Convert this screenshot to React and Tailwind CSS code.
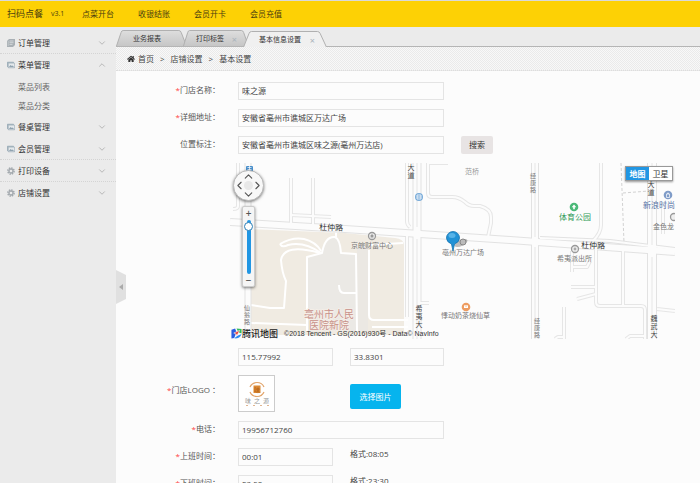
import React from "react";
import { FaHome } from "react-icons/fa";
import { FiChevronDown, FiChevronUp, FiChevronLeft, FiChevronRight } from "react-icons/fi";

const navLinks = ["点菜开台", "收银结账", "会员开卡", "会员充值"];

const menus = [
  { name: "订单管理", icon: "doc" },
  { name: "菜单管理", icon: "card", line: true, open: true, children: ["菜品列表", "菜品分类"] },
  { name: "餐桌管理", icon: "card" },
  { name: "会员管理", icon: "card" },
  { name: "打印设备", icon: "gear", line: true },
  { name: "店铺设置", icon: "gear", line: true },
];

const MenuIcon = ({ type }) => {
  if (type === "doc") {
    return (
      <svg viewBox="0 0 8 8" className="w-[8px] h-[8px] shrink-0">
        <path d="M2 0h6v6l-2 2H0V2z" fill="#a9b0b5" />
        <path d="M2.5 2h4M2.5 3.7h4M2.5 5.4h3" stroke="#e3e6e8" strokeWidth="0.7" />
        <path d="M1.2 2v5" stroke="#d5d9dc" strokeWidth="0.6" />
      </svg>
    );
  }
  if (type === "card") {
    return (
      <svg viewBox="0 0 8 8" className="w-[8px] h-[8px] shrink-0">
        <rect x="0" y="0.8" width="7" height="5.4" rx="0.6" fill="#9fb0bb" />
        <rect x="1" y="1.8" width="7" height="5.4" rx="0.6" fill="#a9b7c0" />
        <rect x="1.7" y="2.5" width="5.6" height="3.8" fill="#e4e9ec" />
        <path d="M1.9 6l1.7-2 1.2 1 .8-.6L7 6z" fill="#90a3b0" />
      </svg>
    );
  }
  return (
    <svg viewBox="0 0 8 8" className="w-[8px] h-[8px] shrink-0">
      <circle cx="4" cy="4" r="3.1" fill="none" stroke="#a3a9ae" strokeWidth="1.5" strokeDasharray="1.5 0.9" />
      <circle cx="4" cy="4" r="2" fill="none" stroke="#a3a9ae" strokeWidth="1.3" />
    </svg>
  );
};

const Sidebar = () => (
  <aside className="w-[116px] shrink-0 bg-[#ebebeb] pt-[4px]">
    {menus.map((menu) => (
      <div key={menu.name}>
        <button
          className={`w-full h-[22px] flex items-center pl-[7px] pr-[9px] border-t border-dotted text-[#333] ${
            menu.line ? "border-[#d4d4d4]" : "border-transparent"
          }`}
        >
          <MenuIcon type={menu.icon} />
          <span className="ml-[3px] flex-1 text-left">{menu.name}</span>
          {menu.open ? (
            <FiChevronUp strokeWidth={1.5} className="text-[10px] text-[#999]" />
          ) : (
            <FiChevronDown strokeWidth={1.5} className="text-[10px] text-[#999]" />
          )}
        </button>
        {menu.children && (
          <ul className="pt-[2px]">
            {menu.children.map((child) => (
              <li key={child} className="h-[19px] leading-[19px] pl-[18px]">
                <a href="#" className="text-[#666]">{child}</a>
              </li>
            ))}
          </ul>
        )}
      </div>
    ))}
  </aside>
);

const Tab = ({ label, active, closable, className }) => (
  <div className={`relative h-[16px] flex items-center pt-[2px] text-[7px] ${active ? "z-10" : ""} ${className}`}>
    <svg viewBox="0 0 70 16" preserveAspectRatio="none" className="absolute inset-0 w-full h-full">
      <defs>
        <linearGradient id="tabFill" x1="0" y1="0" x2="0" y2="1">
          <stop offset="0" stopColor="#dedede" />
          <stop offset="1" stopColor="#c6c6c6" />
        </linearGradient>
      </defs>
      <path
        d="M0.5 16L5 2.5Q5.6 0.5 7 0.5H62Q63.6 0.5 64.3 2.5L69.5 16"
        fill={active ? "#f0f0f0" : "url(#tabFill)"}
        stroke="#b0b0b0"
        vectorEffect="non-scaling-stroke"
      />
    </svg>
    <button className="relative text-[#333]">{label}</button>
    {closable && (
      <button aria-label="关闭" className="relative ml-auto text-[9px] leading-none text-[#a8b2ba]">×</button>
    )}
  </div>
);

const Field = ({ id, label, value, required, className = "w-[206px]", children }) => (
  <div className="flex items-start">
    <label htmlFor={id} className="w-[104px] mr-[18px] text-right leading-[16px] shrink-0 text-[#555]">
      {required && <span className="text-[#f44]">*</span>}
      {label}
    </label>
    <input
      id={id}
      defaultValue={value}
      className={`h-[18px] border border-[#e4e4e4] bg-[#fcfcfc] pl-[3px] pb-[2px] text-[#444] shrink-0 outline-none ${className}`}
    />
    {children}
  </div>
);

const roads = [
  "M8 0V43Q8 46 3 46",
  "M61 15V62",
  "M83 15V62",
  "M61 52L101 54",
  "M177 0V58Q177 62 180 64",
  "M177 72V154",
  "M218 0H198V30Q198 34 202 34H222Q229 34 235 39Q239 43 244 43H250Q261 46 261 54V60L258 74",
  "M371 0V62Q371 70 363 78",
  "M433 38V71",
  "M366 86V139Q366 143 370 143H411Q415 143 415 147V176",
  "M393 86V143",
  "M342 88V109",
  "M342 104H357L360 98",
  "M341 124H366",
  "M347 136L366 131",
  "M427 146L445 148",
  "M334 144V176",
  "M325 176L328 174H334",
  "M396 176L400 173H415",
  "M190 140H199",
];

const campus = [
  "M50 81Q62 74 74 76Q86 79 91 88",
  "M50 81Q52 85 58 82Q74 78 91 90",
  "M77 168V94L92 90Q95 73 105 74Q110 76 111 90L126 91L127 168",
  "M106 74V68",
  "M90 90Q54 80 51 97Q52 110 56 118L54 145H40L21 142",
  "M109 122Q109 130 114 130H126",
  "M21 160L77 162",
  "M139 87V152Q139 157 144 157H178",
  "M142 164H178",
  "M139 82L173 80",
  "M176 80V154",
];

const VText = ({ x, y, text, step = 8, fill = "#444", size = 7 }) =>
  text.split("").map((ch, i) => (
    <text key={i} x={x} y={y + i * step} fontSize={size} fill={fill} textAnchor="middle">
      {ch}
    </text>
  ));

const MapCanvas = () => (
  <svg viewBox="0 0 445 176" preserveAspectRatio="xMinYMin slice" className="w-full h-full">
    {/* hospital block */}
    <path d="M21 66L115 70L165 75Q174 76 174 82V172H21z" fill="#f0ebe2" />
    <path d="M77 94L92 90Q95 74 105 74Q110 76 111 90L126 91V168H77z" fill="#ebe9e5" />
    <path d="M127 82H138V168H127z" fill="#ebe8e3" />
    <g fill="none" stroke="#fff" strokeWidth="2" strokeLinejoin="round">
      {campus.map((d) => <path key={d} d={d} />)}
    </g>

    {/* streets */}
    <g fill="none" stroke="#e6e6e6" strokeWidth="4" strokeLinejoin="round">
      {roads.map((d) => <path key={d} d={d} />)}
    </g>
    <g fill="none" stroke="#e2e2e2">
      <path d="M18 0V176" strokeWidth="7" />
      <path d="M187 0V176" strokeWidth="9" />
      <path d="M305 0V176" strokeWidth="8" />
      <path d="M422 0V176" strokeWidth="10" />
      <path d="M0 59L115 66L280 77L445 89" strokeWidth="8" />
      <path d="M310 75L380 78L445 86" strokeWidth="4" />
    </g>
    <g fill="none" stroke="#fcfcfc" strokeWidth="2" strokeLinejoin="round">
      {roads.map((d) => <path key={d} d={d} />)}
    </g>
    <g fill="none" stroke="#fcfcfc">
      <path d="M18 0V176" strokeWidth="5" />
      <path d="M187 0V176" strokeWidth="7" />
      <path d="M305 0V176" strokeWidth="6" />
      <path d="M422 0V176" strokeWidth="8" />
      <path d="M0 59L115 66L280 77L445 89" strokeWidth="6" />
      <path d="M310 75L380 78L445 86" strokeWidth="2" />
    </g>
    <path d="M187 0V64M187 76V176M305 0V74M305 84V176M422 0V82M422 94V176" stroke="#e6e6e6" fill="none" />
    <path d="M391 0L394 80M393 30L419 28" stroke="#d2d2d2" strokeDasharray="3 2" fill="none" />

    {/* street names */}
    <VText x={181} y={7} text="大道" />
    <VText x={189} y={148} text="希夷大" />
    <VText x={303} y={15} text="经康路" step={7} fill="#777" size={6} />
    <VText x={307} y={160} text="经康路" step={7} fill="#777" size={6} />
    <VText x={421} y={24} text="大道" />
    <VText x={424} y={158} text="魏武大" />
    <VText x={17} y={147} text="仙翁路" step={7} fill="#777" size={6} />
    <g fontSize="8" fill="#333">
      <text x="89" y="67" transform="rotate(2 89 67)">杜仲路</text>
      <text x="351" y="85" transform="rotate(2 351 85)">杜仲路</text>
    </g>

    {/* places */}
    <rect x="16" y="3" width="7" height="6" rx="1" fill="#4a90cc" />
    <path d="M17.500 4.500h4M17.500 6.500h4M19.500 3v6" stroke="#fff" strokeWidth="0.7" />
    <circle cx="189" cy="34" r="4" fill="#78abd9" />
    <path d="M187 32h4v4h-4zM187 34h4" stroke="#fff" strokeWidth="0.8" fill="none" />
    <circle cx="142" cy="73" r="3.5" fill="#eee" stroke="#999" strokeWidth="1.3" />
    <path d="M140.600 74.500V72.500L142 71L143.400 72.500V74.500z" fill="#999" />
    <circle cx="345" cy="86" r="3.5" fill="#eee" stroke="#999" strokeWidth="1.3" />
    <circle cx="345" cy="86" r="1.4" fill="#aaa" />
    <circle cx="344" cy="44" r="4.300" fill="#4ab877" />
    <path d="M344 41.500l2.300 2.700h-1.500v2h-1.600v-2h-1.500z" fill="#fff" />
    <circle cx="236" cy="144" r="4.300" fill="#ee9d62" />
    <path d="M234 142h4v3h-4z" fill="#fff" />
    <path d="M234.500 142l1.500 1.500l1.500-1.500" stroke="#ee9d62" strokeWidth="0.7" fill="none" />
    <circle cx="438" cy="32" r="4.300" fill="#7f9cc8" />
    <path d="M436.500 31h3v3.500h-3zM437 31q1-2.500 2 0" stroke="#fff" strokeWidth="0.7" fill="none" />
    <circle cx="444" cy="54" r="3.500" fill="#eee" stroke="#999" strokeWidth="1.3" />
    <g fontSize="7" fill="#777">
      <text x="235" y="11" fill="#999">范桥</text>
      <text x="121" y="85">京皖财富中心</text>
      <text x="212" y="92">亳州万达广场</text>
      <text x="327" y="98">希夷派出所</text>
      <text x="211" y="155">悸动奶茶烧仙草</text>
      <text x="423" y="66">金色龙</text>
      <text x="413" y="45" fontSize="8" fill="#5673a6">新浪时尚</text>
      <text x="329" y="57" fontSize="8" fill="#2f9a57">体育公园</text>
    </g>
    <g fontSize="10" fill="#c8918a" stroke="#f6efe8" strokeWidth="1.5" paintOrder="stroke">
      <text x="74" y="155">亳州市人民</text>
      <text x="79" y="166">医院新院</text>
    </g>

    {/* marker */}
    <ellipse cx="231" cy="80" rx="7" ry="3" fill="#000" opacity="0.25" transform="rotate(-25 231 80)" />
    <circle cx="233" cy="79" r="3" fill="#bbb" stroke="#888" />
    <path d="M223 88L221.500 81Q216.500 79 216.500 75A6.500 6.500 0 0 1 229.500 75Q229.500 79 224.500 81z" fill="#2192d6" stroke="#1774b0" strokeWidth="0.8" />
    <ellipse cx="222" cy="72.500" rx="3.500" ry="2.500" fill="#6fc2f0" opacity="0.7" />
  </svg>
);

const TencentLogo = () => (
  <svg viewBox="0 0 12 12" className="w-[11px] h-[11px]">
    <path d="M0.500 2L4.500 0.500L6 4.500L3.500 11L0.500 11.500z" fill="#2b5fe0" />
    <path d="M6 0.500L11.500 1V6L8 4.500z" fill="#2fbb5c" />
    <path d="M4 11L7 8.500L11.500 6.500Q10 11.500 4 11.500z" fill="#2f8df0" />
    <path d="M9.500 2.500L6.500 8.500L5.500 6.500L3 5.500z" fill="#e8443a" stroke="#fff" strokeWidth="0.6" />
  </svg>
);

const MapPanel = () => (
  <div className="relative h-[176px] ml-[114px] mr-[25px] overflow-hidden">
    <MapCanvas />

    {/* pan control */}
    <div className="absolute left-[3px] top-[7px] w-[31px] h-[31px] rounded-full bg-[#f8f8f8] border border-[#bbb] shadow-[0_1px_3px_rgba(0,0,0,0.5)] text-[#555] text-[13px]">
      <button aria-label="上" className="absolute left-[8px] -top-px"><FiChevronUp /></button>
      <button aria-label="左" className="absolute -left-px top-[8px]"><FiChevronLeft /></button>
      <button aria-label="右" className="absolute -right-px top-[8px]"><FiChevronRight /></button>
      <button aria-label="下" className="absolute left-[8px] -bottom-px"><FiChevronDown /></button>
      <span className="absolute left-[10px] top-[10px] w-[9px] h-[9px] rounded-full bg-[#e8e8e8]"></span>
    </div>

    {/* zoom control */}
    <div className="absolute left-[12px] top-[43px] w-[13px] h-[81px] rounded-[2px] bg-[#f5f5f5] border border-[#ccc] shadow-[0_1px_3px_rgba(0,0,0,0.5)] flex flex-col items-center justify-between">
      <button aria-label="放大" className="h-[11px] leading-[10px] text-[10px] font-semibold text-[#555]">+</button>
      <input
        type="range"
        aria-label="缩放"
        defaultValue="95"
        className="appearance-none [writing-mode:vertical-lr] [direction:rtl] w-[9px] h-[54px] bg-transparent [&::-webkit-slider-runnable-track]:w-[4px] [&::-webkit-slider-runnable-track]:h-full [&::-webkit-slider-runnable-track]:rounded-full [&::-webkit-slider-runnable-track]:bg-[#2196e3] [&::-webkit-slider-thumb]:appearance-none [&::-webkit-slider-thumb]:w-[9px] [&::-webkit-slider-thumb]:h-[9px] [&::-webkit-slider-thumb]:-ml-[3px] [&::-webkit-slider-thumb]:rounded-full [&::-webkit-slider-thumb]:bg-white [&::-webkit-slider-thumb]:border [&::-webkit-slider-thumb]:border-[#2b7fb8]"
      />
      <button aria-label="缩小" className="h-[11px] leading-[11px] text-[10px] font-semibold text-[#555]">−</button>
    </div>

    {/* map type */}
    <div className="absolute right-[2px] top-[3px] flex h-[15px] text-[8px] border border-[#999] shadow-[0_1px_2px_rgba(0,0,0,0.4)]">
      <button className="w-[23px] bg-[#2196e3] text-white font-bold">地图</button>
      <button className="w-[23px] bg-white text-[#333]">卫星</button>
    </div>

    <div className="absolute left-[1px] bottom-0 h-[11px] flex items-center">
      <TencentLogo />
      <span className="text-[9px] text-[#222] font-medium">腾讯地图</span>
      <span className="ml-[6px] text-[7px] leading-[8px] text-[#333] font-['Liberation_Sans','Noto_Sans_CJK_SC',sans-serif]">
        ©2018 Tencent - GS(2016)930号 - Data© NavInfo
      </span>
    </div>
  </div>
);

const ShopLogo = () => (
  <svg viewBox="0 0 35 35" className="w-full h-full">
    <path d="M11 11Q13 6.500 18 6.500T25 11M11 16Q13 20.500 18 20.500T25 16" fill="none" stroke="#e2a46a" strokeWidth="1.2" />
    <rect x="14.500" y="9.500" width="7" height="7.500" fill="#dd8a35" />
    <text x="18" y="16" fontSize="6" fill="#b05f17" textAnchor="middle">味</text>
    <g fontSize="6" fill="#999" textAnchor="middle">
      <text x="9" y="27">味</text>
      <text x="18" y="27">之</text>
      <text x="27" y="27">源</text>
    </g>
    <path d="M7 29.500h2M14 29.500h2M21 29.500h2M28 29.500h2" stroke="#e0b590" />
  </svg>
);

const App = () => {
  return (
    <div className="h-screen flex flex-col overflow-hidden bg-[#fcfcfc] text-[8px] leading-[12px] font-['Open_Sans','Noto_Sans_CJK_SC',sans-serif]">
      <header className="h-[27px] shrink-0 bg-[#fdd105] border-t border-[#d9d9d9] flex items-center pl-[7px] text-[#4a3d10]">
        <h1 className="text-[9px]">扫码点餐</h1>
        <span className="ml-[8px] w-[23px] text-[7px]">v3.1</span>
        <nav className="ml-[8px] flex gap-[24px]">
          {navLinks.map((link) => (
            <a key={link} href="#">{link}</a>
          ))}
        </nav>
      </header>

      <div className="flex flex-1 min-h-0">
        <Sidebar />

        <main className="relative flex-1 min-w-0 overflow-hidden">
          {/* Tabs */}
          <div className="h-[20px] bg-[#ebebeb] border-b border-[#b5b5b5] flex items-end">
            <Tab label="业务报表" className="w-[71px] pl-[17px]" />
            <Tab label="打印标签" closable className="w-[66px] -ml-[4px] pl-[13px] pr-[12px]" />
            <Tab label="基本信息设置" active closable className="w-[84px] -ml-[6px] -mb-px pl-[16px] pr-[12px]" />
          </div>

          <div className="h-[24px] flex items-center gap-[6px] pl-[11px] text-[#444] border-b border-dotted border-[#ddd] bg-[repeating-conic-gradient(#eaeaea_0_25%,#f8f8f8_0_50%)] bg-size-[2px_2px]">
            <a href="#" className="flex items-center gap-[3px]">
              <FaHome className="text-[8px] text-[#333]" />
              首页
            </a>
            <span>&gt;</span>
            <a href="#">店铺设置</a>
            <span>&gt;</span>
            <span>基本设置</span>
          </div>

          <form className="pt-[11px] flex flex-col gap-[9px]">
            <Field id="name" label="门店名称：" value="味之源" required />
            <Field id="address" label="详细地址：" value="安徽省亳州市谯城区万达广场" required />
            <Field id="place" label="位置标注：" value="安徽省亳州市谯城区味之源(亳州万达店)">
              <button type="button" className="ml-[17px] w-[32px] h-[18px] rounded-[2px] bg-[#e8e4e4] text-[#333]">搜索</button>
            </Field>

            <MapPanel />

            <div className="flex ml-[122px] gap-[17px]">
              <input aria-label="经度" defaultValue="115.77992" className="w-[95px] h-[18px] border border-[#e4e4e4] bg-[#fcfcfc] pl-[3px] pb-[2px] text-[#444]" />
              <input aria-label="纬度" defaultValue="33.8301" className="w-[94px] h-[18px] border border-[#e4e4e4] bg-[#fcfcfc] pl-[3px] pb-[2px] text-[#444]" />
            </div>

            <div className="flex h-[37px]">
              <span className="w-[104px] mr-[18px] text-right leading-[30px] shrink-0 text-[#555]">
                <span className="text-[#f44]">*</span>门店LOGO ：
              </span>
              <div className="w-[37px] h-[37px] shrink-0 border border-[#ccc] bg-white">
                <ShopLogo />
              </div>
              <button type="button" className="self-end mb-[3px] ml-[75px] w-[51px] h-[25px] rounded-[2px] bg-[#06b4ee] text-white">选择图片</button>
            </div>

            <Field id="phone" label="电话：" value="19956712760" required />
            <Field id="open" label="上班时间：" value="00:01" required className="w-[95px]">
              <span className="ml-[17px] text-[#444]">格式:08:05</span>
            </Field>
            <Field id="close" label="下班时间：" value="23:50" required className="w-[95px]">
              <span className="ml-[17px] text-[#444]">格式:23:30</span>
            </Field>
          </form>

          {/* collapse handle */}
          <button
            aria-label="收起"
            className="absolute left-0 top-[243px] w-[10px] h-[34px] bg-[#e0e0e0] flex items-center justify-center [clip-path:polygon(0_0,100%_15%,100%_85%,0_100%)]"
          >
            <span className="border-y-[3px] border-y-transparent border-r-[4px] border-r-[#aaa]"></span>
          </button>
        </main>
      </div>
    </div>
  );
};

export default App;
